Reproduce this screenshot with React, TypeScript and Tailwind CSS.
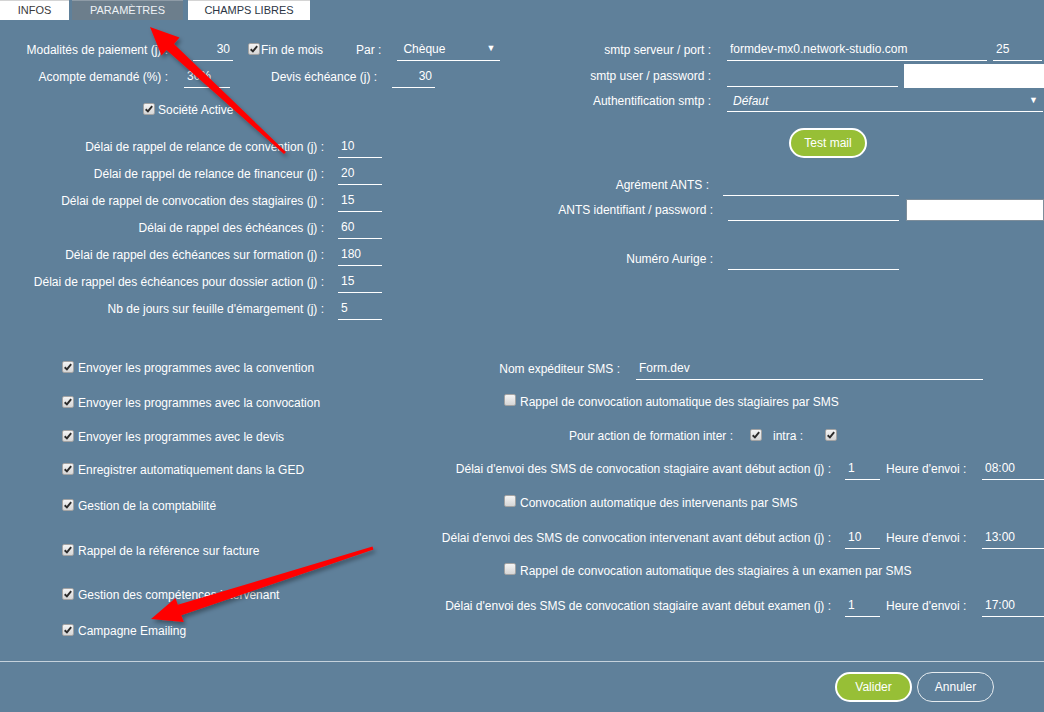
import clsx from "clsx";

const FONT = "font-['Liberation_Sans',Arial,sans-serif]";

function Field({
  value = "",
  right = false,
  className = "",
}: {
  value?: string;
  right?: boolean;
  className?: string;
}) {
  return (
    <input
      readOnly
      value={value}
      className={clsx(
        "h-[22px] shrink-0 border-0 border-b border-white bg-transparent text-[12px] text-white outline-none",
        right ? "pr-[3px] text-right" : "pl-[3px]",
        className
      )}
    />
  );
}

function Check({ checked = false }: { checked?: boolean }) {
  return (
    <span className="inline-flex h-[12px] w-[12px] shrink-0 items-center justify-center rounded-[2px] border border-[#a3a3a3] bg-linear-to-b from-[#f4f4f4] to-[#d6d6d6]">
      {checked && (
        <svg viewBox="0 0 12 12" className="h-[10px] w-[10px]">
          <path
            d="M2 6.3 L4.7 8.8 L9.8 2.6"
            fill="none"
            stroke="#2b2b2b"
            strokeWidth="2.3"
          />
        </svg>
      )}
    </span>
  );
}

function Label({ w, children }: { w: string; children: React.ReactNode }) {
  return (
    <span className={clsx("shrink-0 whitespace-nowrap text-right", w)}>
      {children}
    </span>
  );
}

function Select({
  value,
  className = "",
  italic = false,
}: {
  value: string;
  className?: string;
  italic?: boolean;
}) {
  return (
    <div
      className={clsx(
        "flex h-[22px] shrink-0 items-center justify-between border-b border-white pl-[6px] pr-[5px]",
        className
      )}
    >
      <span className={clsx(italic && "italic")}>{value}</span>
      <span className="text-[9px]">▼</span>
    </div>
  );
}

const delays = [
  ["Délai de rappel de relance de convention (j) :", "10"],
  ["Délai de rappel de relance de financeur (j) :", "20"],
  ["Délai de rappel de convocation des stagiaires (j) :", "15"],
  ["Délai de rappel des échéances (j) :", "60"],
  ["Délai de rappel des échéances sur formation (j) :", "180"],
  ["Délai de rappel des échéances pour dossier action (j) :", "15"],
  ["Nb de jours sur feuille d'émargement (j) :", "5"],
];

const options = [
  ["Envoyer les programmes avec la convention", "mt-[18px]"],
  ["Envoyer les programmes avec la convocation", "mt-[15px]"],
  ["Envoyer les programmes avec le devis", "mt-[14px]"],
  ["Enregistrer automatiquement dans la GED", "mt-[13px]"],
  ["Gestion de la comptabilité", "mt-[16px]"],
  ["Rappel de la référence sur facture", "mt-[25px]"],
  ["Gestion des compétences intervenant", "mt-[24px]"],
  ["Campagne Emailing", "mt-[16px]"],
];

function SmsDelay({
  label,
  days,
  hour,
  className,
}: {
  label: string;
  days: string;
  hour: string;
  className: string;
}) {
  return (
    <div className={clsx("flex h-[27px] items-center", className)}>
      <Label w="w-[411px]">{label}</Label>
      <Field value={days} className="ml-[14px] w-[35px]" />
      <span className="ml-[6px] whitespace-nowrap">Heure d'envoi :</span>
      <Field value={hour} className="ml-auto w-[62px]" />
    </div>
  );
}

function Arrows() {
  return (
    <svg
      className="pointer-events-none absolute left-0 top-0"
      width="1044"
      height="712"
    >
      <defs>
        <filter id="sh" x="-20%" y="-20%" width="140%" height="140%">
          <feDropShadow dx="2" dy="3" stdDeviation="2" floodColor="#000" floodOpacity="0.35" />
        </filter>
      </defs>
      <polygon
        filter="url(#sh)"
        fill="#ff0000"
        points="150,27 179.5,37.5 174,44 286,151.9 284,154.1 166.5,50 161.5,55.5"
      />
      <polygon
        filter="url(#sh)"
        fill="#ff0000"
        points="151,619 175.5,598 177.8,604.8 372.5,546.6 373.5,549.4 181.3,615.3 183.8,622"
      />
    </svg>
  );
}

export default function App() {
  return (
    <div
      className={clsx(
        "relative h-[712px] w-[1044px] overflow-hidden bg-[#5f809a] text-[12px] text-white",
        FONT
      )}
    >
      {/* onglets */}
      <div className="flex h-[20px] text-[11px]">
        <div className="flex w-[69px] items-center justify-center border-t border-[#d4d4d4] bg-white text-[#3a3a3a]">
          INFOS
        </div>
        <div className="ml-[3px] flex w-[111px] items-center justify-center border-t border-[#8e9ba6] bg-[#6c7e8c] text-[#eef2f6]">
          PARAMÈTRES
        </div>
        <div className="ml-[5px] flex w-[122px] items-center justify-center border-t border-[#d4d4d4] bg-white text-[#2c3644]">
          CHAMPS LIBRES
        </div>
      </div>

      {/* haut */}
      <div className="flex h-[320px]">
        <div className="w-[520px] shrink-0">
          <div className="mt-[16px] flex h-[27px] items-center">
            <Label w="w-[168px]">Modalités de paiement (j) :</Label>
            <Field value="30" right className="ml-[25px] w-[40px]" />
            <span className="ml-[15px]">
              <Check checked />
            </span>
            <span className="ml-[1px] whitespace-nowrap">Fin de mois</span>
            <span className="ml-[33px] whitespace-nowrap">Par :</span>
            <Select value="Chèque" className="ml-[16px] w-[103px]" />
          </div>
          <div className="flex h-[27px] items-center">
            <Label w="w-[168px]">Acompte demandé (%) :</Label>
            <Field value="30%" className="ml-[16px] w-[46px]" />
            <span className="ml-[41px] whitespace-nowrap">Devis échéance (j) :</span>
            <Field value="30" right className="ml-[15px] w-[43px]" />
          </div>
          <div className="mt-[10px] flex h-[20px] items-center">
            <span className="ml-[143px]">
              <Check checked />
            </span>
            <span className="ml-[3px] whitespace-nowrap">Société Active</span>
          </div>
          <div className="mt-[13px]">
            {delays.map(([label, value]) => (
              <div key={label} className="flex h-[27px] items-center">
                <Label w="w-[324px]">{label}</Label>
                <Field value={value} className="ml-[14px] w-[44px]" />
              </div>
            ))}
          </div>
        </div>

        <div className="flex-1">
          <div className="mt-[16px] flex h-[27px] items-center">
            <Label w="w-[191px]">smtp serveur / port :</Label>
            <Field value="formdev-mx0.network-studio.com" className="ml-[16px] w-[260px]" />
            <Field value="25" className="ml-[6px] w-[49px]" />
          </div>
          <div className="flex h-[26px] items-center">
            <Label w="w-[191px]">smtp user / password :</Label>
            <Field className="ml-[16px] w-[171px]" />
            <div className="ml-[6px] h-[24px] w-[140px] shrink-0 bg-white" />
          </div>
          <div className="flex h-[24px] items-center">
            <Label w="w-[191px]">Authentification smtp :</Label>
            <Select value="Défaut" italic className="ml-[16px] w-[316px]" />
          </div>
          <div className="mt-[15px] flex">
            <button className="ml-[269px] h-[30px] w-[78px] rounded-full border-2 border-white bg-[#97bf36] text-[12px] text-white">
              Test mail
            </button>
          </div>
          <div className="mt-[13px] flex h-[27px] items-center">
            <Label w="w-[189px]">Agrément ANTS :</Label>
            <Field className="ml-[14px] w-[176px]" />
          </div>
          <div className="flex h-[23px] items-center">
            <Label w="w-[193px]">ANTS identifiant / password :</Label>
            <Field className="ml-[15px] w-[171px]" />
            <div className="ml-[7px] h-[22px] w-[138px] shrink-0 border border-[#7d8d9a] bg-white" />
          </div>
          <div className="mt-[24px] flex h-[27px] items-center">
            <Label w="w-[193px]">Numéro Aurige :</Label>
            <Field className="ml-[15px] w-[171px]" />
          </div>
        </div>
      </div>

      {/* bas */}
      <div className="flex h-[321px]">
        <div className="w-[420px] shrink-0">
          {options.map(([label, mt]) => (
            <div key={label} className={clsx("flex h-[20px] items-center", mt)}>
              <span className="ml-[62px]">
                <Check checked />
              </span>
              <span className="ml-[4px] whitespace-nowrap">{label}</span>
            </div>
          ))}
        </div>

        <div className="flex-1">
          <div className="mt-[15px] flex h-[27px] items-center">
            <Label w="w-[200px]">Nom expéditeur SMS :</Label>
            <Field value="Form.dev" className="ml-[16px] w-[347px]" />
          </div>
          <div className="mt-[10px] flex h-[20px] items-center">
            <span className="ml-[84px]">
              <Check />
            </span>
            <span className="ml-[4px] whitespace-nowrap">
              Rappel de convocation automatique des stagiaires par SMS
            </span>
          </div>
          <div className="mt-[14px] flex h-[20px] items-center">
            <Label w="w-[313px]">Pour action de formation inter :</Label>
            <span className="ml-[17px]">
              <Check checked />
            </span>
            <span className="ml-[11px] whitespace-nowrap">intra :</span>
            <span className="ml-[22px]">
              <Check checked />
            </span>
          </div>
          <SmsDelay
            className="mt-[9px]"
            label="Délai d'envoi des SMS de convocation stagiaire avant début action (j) :"
            days="1"
            hour="08:00"
          />
          <div className="mt-[11px] flex h-[20px] items-center">
            <span className="ml-[84px]">
              <Check />
            </span>
            <span className="ml-[4px] whitespace-nowrap">
              Convocation automatique des intervenants par SMS
            </span>
          </div>
          <SmsDelay
            className="mt-[11px]"
            label="Délai d'envoi des SMS de convocation intervenant avant début action (j) :"
            days="10"
            hour="13:00"
          />
          <div className="mt-[10px] flex h-[20px] items-center">
            <span className="ml-[84px]">
              <Check />
            </span>
            <span className="ml-[4px] whitespace-nowrap">
              Rappel de convocation automatique des stagiaires à un examen par SMS
            </span>
          </div>
          <SmsDelay
            className="mt-[11px]"
            label="Délai d'envoi des SMS de convocation stagiaire avant début examen (j) :"
            days="1"
            hour="17:00"
          />
        </div>
      </div>

      <div className="h-px bg-[#c5d2dc]" />

      <div className="mt-[10px] flex">
        <button className="ml-[835px] h-[30px] w-[77px] rounded-full border-2 border-white bg-[#97bf36] text-[12px] text-white">
          Valider
        </button>
        <button className="ml-[5px] h-[30px] w-[77px] rounded-full border border-[#e6ecf0] bg-transparent text-[12px] text-white">
          Annuler
        </button>
      </div>

      <Arrows />
    </div>
  );
}
